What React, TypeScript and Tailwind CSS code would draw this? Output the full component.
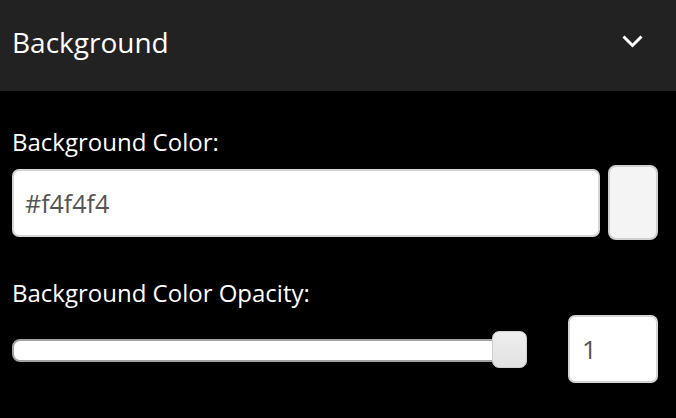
import React from 'react';

/* ── Collapsible "Background" settings panel ─────────────────── */

const Chevron = () => (
  <svg width="21" height="14" viewBox="0 0 21 14" fill="none" aria-hidden="true">
    <polyline points="1.5,1.5 10.5,10.5 19.5,1.5" stroke="#ffffff" strokeWidth="3" strokeLinejoin="miter" />
  </svg>
);

const Label = ({ children, className = '' }: { children: React.ReactNode; className?: string }) => (
  <label className={`block text-[24px] leading-[33px] text-white ${className}`}>{children}</label>
);

export default function App() {
  return (
    <div className="min-h-[418px] w-[676px] bg-black font-['Open_Sans',sans-serif]">
      {/* Header */}
      <div className="flex h-[91px] items-center justify-between bg-[#222222] pb-[8px] pl-[12px] pr-[33px]">
        <h2 className="text-[28px] leading-[38px] text-white">Background</h2>
        <Chevron />
      </div>

      <div className="pl-[12px] pr-[18px] pt-[34px]">
        {/* Background colour */}
        <Label>Background Color:</Label>
        <div className="mt-[7px] flex items-center gap-[8px]">
          <input
            readOnly
            value="#f4f4f4"
            className="h-[68px] w-[588px] rounded-[7px] border-2 border-[#d4d4d4] bg-white pl-[11px] text-[25px] text-[#555555] outline-none"
          />
          <div className="h-[75px] w-[50px] rounded-[8px] border-2 border-[#cfcfcf] bg-[#f4f4f4]" />
        </div>

        {/* Opacity */}
        <Label className="mt-[36px]">Background Color Opacity:</Label>
        <div className="mt-[6px] flex items-center">
          <div className="relative h-[37px] w-[515px]">
            <div className="absolute left-0 right-[8px] top-[8px] h-[23px] rounded-[8px] border-2 border-[#a3a3a3] bg-white" />
            <div className="absolute right-0 top-0 h-[37px] w-[35px] rounded-[7px] border border-[#cfcfcf] bg-gradient-to-b from-[#eeeeee] to-[#e2e2e2]" />
          </div>
          <input
            readOnly
            value="1"
            className="ml-[41px] h-[68px] w-[90px] rounded-[7px] border-2 border-[#d4d4d4] bg-white pl-[12px] text-[26px] text-[#555555] outline-none"
          />
        </div>
      </div>
    </div>
  );
}
